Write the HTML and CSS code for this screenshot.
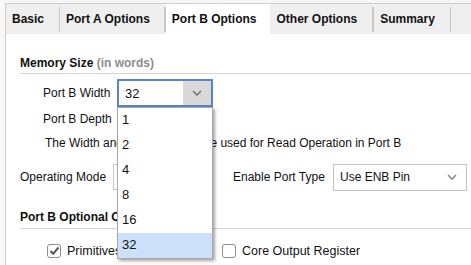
FILE: index.html
```html
<!DOCTYPE html>
<html lang="en">

<head>
  <meta charset="UTF-8">
  <meta name="viewport" content="width=device-width, initial-scale=1.0">
  <title>Port B Options</title>
  <link rel="stylesheet" href="styles.css">
</head>

<body>
  <div class="frame">
    <div class="tabs">
      <div class="tab">Basic</div>
      <div class="tab">Port A Options</div>
      <div class="tab active">Port B Options</div>
      <div class="tab">Other Options</div>
      <div class="tab">Summary</div>
    </div>

    <div class="panel">
      <div class="section-title">Memory Size <span class="hint">(in words)</span></div>

      <div class="row row-width">
        <span class="label">Port B Width</span>
        <div class="combo focused">
          <span class="combo-value">32</span>
          <span class="combo-arrow">
            <svg width="10" height="6" viewBox="0 0 10 6"><path d="M1 1 L5 5 L9 1" fill="none" stroke="#777" stroke-width="1.6"/></svg>
          </span>
          <ul class="popup">
            <li>1</li>
            <li>2</li>
            <li>4</li>
            <li>8</li>
            <li>16</li>
            <li class="selected">32</li>
          </ul>
        </div>
      </div>

      <div class="row row-depth">
        <span class="label">Port B Depth</span>
        <div class="field">1024</div>
      </div>

      <div class="row row-note">
        The Width and Depth values are used for Read Operation in Port B
      </div>

      <div class="row row-mode">
        <span class="label-wide">Operating Mode</span>
        <div class="combo small">
          <span class="combo-value">Write First</span>
        </div>
        <span class="label-enable">Enable Port Type</span>
        <div class="combo plain">
          <span class="combo-value">Use ENB Pin</span>
          <span class="combo-arrow">
            <svg width="10" height="6" viewBox="0 0 10 6"><path d="M1 1 L5 5 L9 1" fill="none" stroke="#888" stroke-width="1.6"/></svg>
          </span>
        </div>
      </div>

      <div class="section-title second">Port B Optional Output Registers</div>

      <div class="row row-checks">
        <label class="check first">
          <span class="box">
            <svg width="11" height="10" viewBox="0 0 11 10"><path d="M1.5 5 L4.2 7.8 L9.5 1.5" fill="none" stroke="#555" stroke-width="2"/></svg>
          </span>
          <span class="check-text">Primitives Output Register</span>
        </label>
        <label class="check">
          <span class="box"></span>
          <span class="check-text">Core Output Register</span>
        </label>
      </div>
    </div>
  </div>
</body>

</html>
```

FILE: styles.css
```css
body {
  margin: 0;
  padding: 3px 0 0 0;
  background-color: #f7f7f7;
  font-family: "Liberation Sans", Arial, sans-serif;
  font-size: 12px;
  color: #111;
  overflow: hidden;
}

.frame {
  margin-left: 5px;
  border-top: 1px solid #cdcdcd;
  border-left: 1px solid #cdcdcd;
  height: 262px;
  display: flex;
  flex-direction: column;
}

.tabs {
  display: flex;
  align-items: center;
  height: 30px;
  background-color: #efefef;
}

.tab {
  height: 25px;
  line-height: 25px;
  padding: 0 15px 0 6px;
  font-weight: bold;
  border-right: 1px solid #c9c9c9;
  margin-top: 1px;
}

.tab:nth-child(2) {
  border-right-width: 2px;
  padding-right: 14px;
}

.tab.active {
  align-self: stretch;
  height: 30px;
  line-height: 31px;
  margin-top: 0;
  background-color: #fff;
  border-right: none;
  padding: 0 14px 0 6px;
}

.tab:nth-child(4) {
  border-right-width: 2px;
}

.panel {
  flex: 1;
  background-color: #fff;
  padding: 21px 0 0 14px;
}

.section-title {
  font-weight: bold;
  height: 16px;
  line-height: 16px;
  padding-bottom: 2px;
  border-bottom: 1px solid #d4d4d4;
  white-space: nowrap;
}

.section-title .hint {
  color: #8c8c8c;
}

.section-title.second {
  margin-top: 19px;
  height: 19px;
  padding-bottom: 0;
}

.row {
  display: flex;
  align-items: center;
  white-space: nowrap;
}

.label {
  width: 74px;
  padding-left: 23px;
}

.row-width {
  margin-top: 5px;
  height: 28px;
}

.row-depth {
  height: 24px;
}

.row-note {
  height: 24px;
  padding-left: 25px;
}

.row-mode {
  height: 26px;
  margin-top: 9px;
}

.label-wide {
  width: 93px;
}

.label-enable {
  margin-left: 20px;
  width: 100px;
}

.row-checks {
  margin-top: 14px;
  height: 16px;
}

.combo {
  position: relative;
  display: flex;
  align-items: center;
  box-sizing: border-box;
  height: 28px;
  width: 96px;
  border: 1px solid #c4c4c4;
  background-color: #fff;
}

.combo.focused {
  border: 2px solid #5683cc;
}

.combo-value {
  flex: 1;
  padding-left: 6px;
}

.combo.focused .combo-value {
  font-size: 13px;
}

.combo-arrow {
  display: flex;
  align-items: center;
  justify-content: center;
  width: 28px;
  align-self: stretch;
}

.combo.focused .combo-arrow {
  background-color: #d9d9d9;
}

.combo.small {
  height: 26px;
  width: 100px;
}

.combo.plain {
  height: 27px;
  width: 134px;
}

.field {
  width: 96px;
  height: 22px;
  border: 1px solid #e8b48a;
  box-sizing: border-box;
  padding-left: 5px;
  line-height: 20px;
}

.popup {
  position: absolute;
  top: 26px;
  left: -2px;
  width: 96px;
  box-sizing: border-box;
  margin: 0;
  padding: 0;
  list-style: none;
  background-color: #fff;
  border: 1px solid #a8a8a8;
  box-shadow: 2px 2px 3px rgba(0, 0, 0, 0.35);
  z-index: 2;
}

.popup li {
  height: 25px;
  line-height: 24px;
  padding-left: 4px;
  font-size: 13px;
}

.popup li.selected {
  background-color: #cce0fa;
}

.check {
  display: flex;
  align-items: center;
  gap: 6px;
  font-size: 12.5px;
  overflow: hidden;
}

.check.first {
  box-sizing: border-box;
  width: 202px;
  padding-left: 27px;
}

.box {
  flex: none;
  display: flex;
  align-items: center;
  justify-content: center;
  width: 14px;
  height: 14px;
  box-sizing: border-box;
  border: 1px solid #8d8d8d;
  border-radius: 3px;
  background-color: #fff;
}
```
